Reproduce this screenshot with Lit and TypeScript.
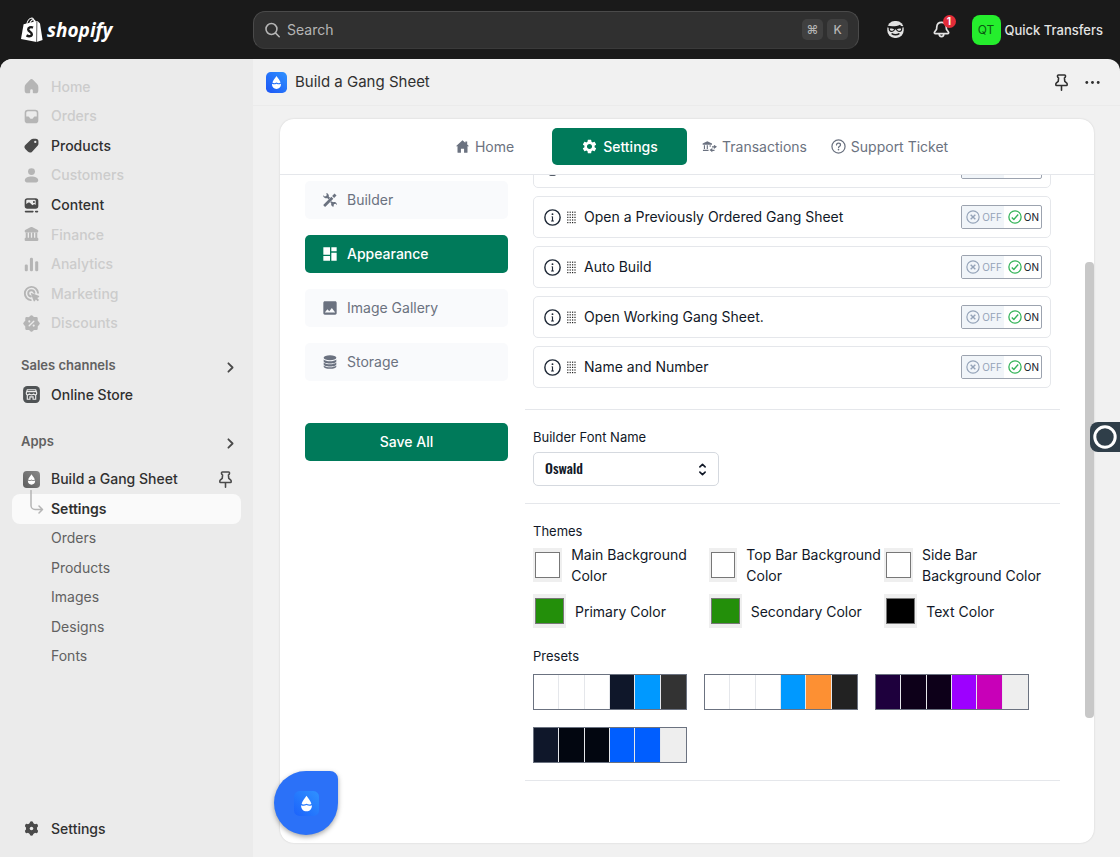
import { LitElement, html, svg, css, nothing, TemplateResult, SVGTemplateResult } from "lit";
import { customElement, property, state } from "lit/decorators.js";
import { classMap } from "lit/directives/class-map.js";

const GEAR = "M19.14 12.94c.04-.3.06-.61.06-.94 0-.32-.02-.64-.07-.94l2.03-1.58a.49.49 0 0 0 .12-.61l-1.92-3.32a.488.488 0 0 0-.59-.22l-2.39.96c-.5-.38-1.03-.7-1.62-.94l-.36-2.54a.484.484 0 0 0-.48-.41h-3.84c-.24 0-.43.17-.47.41l-.36 2.54c-.59.24-1.13.57-1.62.94l-2.39-.96c-.22-.08-.47 0-.59.22L2.74 8.87c-.12.21-.08.47.12.61l2.03 1.58c-.05.3-.09.63-.09.94s.02.64.07.94l-2.03 1.58a.49.49 0 0 0-.12.61l1.92 3.32c.12.22.37.29.59.22l2.39-.96c.5.38 1.03.7 1.62.94l.36 2.54c.05.24.24.41.48.41h3.84c.24 0 .44-.17.47-.41l.36-2.54c.59-.24 1.13-.56 1.62-.94l2.39.96c.22.08.47 0 .59-.22l1.92-3.32c.12-.22.07-.47-.12-.61l-2.01-1.58zM12 15.6c-1.98 0-3.6-1.62-3.6-3.6s1.62-3.6 3.6-3.6 3.6 1.62 3.6 3.6-1.62 3.6-3.6 3.6z";

/* Icons on a 20-unit grid are the admin's own; those on 24 belong to the embedded app. */
const ICONS: Record<string, [number, SVGTemplateResult]> = {
  home: [20, svg`<path fill="currentColor" d="M8.344 3.692a2.25 2.25 0 0 1 3.312 0l3.854 4.19a3.75 3.75 0 0 1 .99 2.538v3.33a2.75 2.75 0 0 1-2.75 2.75h-1.75a.75.75 0 0 1-.75-.75v-2a1.25 1.25 0 1 0-2.5 0v2a.75.75 0 0 1-.75.75h-1.75a2.75 2.75 0 0 1-2.75-2.75v-3.329c0-.94.353-1.847.99-2.539l3.854-4.19Z"/>`],
  orders: [20, svg`<path fill="currentColor" fill-rule="evenodd" d="M6.5 3.500h7a3 3 0 0 1 3 3v7a3 3 0 0 1-3 3h-7a3 3 0 0 1-3-3v-7a3 3 0 0 1 3-3Zm0 1.500A1.500 1.500 0 0 0 5 6.500V10h1.900c.5 0 .9.300 1.100.7l.3.7c.2.500.6.7 1.100.7h1.200c.5 0 .9-.2 1.100-.7l.3-.7c.2-.4.6-.7 1.100-.7H15V6.500A1.500 1.500 0 0 0 13.500 5h-7Z"/>`],
  products: [20, svg`<path fill="currentColor" fill-rule="evenodd" d="M9.600 4.300c.6-.5 1.200-.8 2-.8h2.400a2.600 2.600 0 0 1 2.600 2.600v2.200c0 .8-.3 1.500-.8 2l-5 5.300a3 3 0 0 1-4.300.1l-2.200-2.200a3 3 0 0 1 .1-4.300l5.200-4.900Zm4 3.400a1.100 1.100 0 1 0 0-2.200 1.100 1.100 0 0 0 0 2.200Z"/>`],
  customers: [20, svg`<g fill="currentColor"><circle cx="10" cy="6.300" r="3.300"/><path d="M3.600 14.600c0-2.300 3-3.600 6.400-3.600s6.400 1.300 6.400 3.600c0 1.200-.9 2-2 2H5.600c-1.100 0-2-.8-2-2Z"/></g>`],
  content: [20, svg`<path fill="currentColor" fill-rule="evenodd" d="M6 3h8a2.500 2.500 0 0 1 2.500 2.500v5A2.500 2.500 0 0 1 14 13H6a2.500 2.500 0 0 1-2.500-2.500v-5A2.500 2.500 0 0 1 6 3Zm0 1.500a1 1 0 0 0-1 1v3l1.700-1.200c.5-.4 1.200-.3 1.700.1l2.500 2.300 1-.7c.5-.3 1.100-.3 1.500.1l.6.500V5.500a1 1 0 0 0-1-1H6Z"/><circle cx="12.300" cy="6.700" r="1" fill="currentColor"/><path stroke="currentColor" stroke-width="1.500" stroke-linecap="round" d="M4.300 15.800h7M14 15.800h1.700"/>`],
  finance: [20, svg`<g fill="currentColor"><path d="M9 3.200c.6-.3 1.400-.3 2 0l4.600 2.200c.6.300.9.800.9 1.400 0 .7-.5 1.200-1.200 1.200H4.700c-.7 0-1.200-.5-1.200-1.200 0-.6.300-1.100.9-1.400L9 3.200Z"/><path d="M4.500 8h1.900v6H4.500zM7.600 8h1.800v6H7.600zM10.600 8h1.800v6h-1.800zM13.600 8h1.900v6h-1.900z"/><rect x="3.500" y="13" width="13" height="3.300" rx="1"/></g>`],
  analytics: [20, svg`<g fill="currentColor"><rect x="3.600" y="10" width="2.900" height="6.500" rx="1.200"/><rect x="8.500" y="3.500" width="2.900" height="13" rx="1.200"/><rect x="13.500" y="6.800" width="2.900" height="9.700" rx="1.200"/></g>`],
  marketing: [20, svg`<g fill="none" stroke="currentColor" stroke-width="1.800" stroke-linecap="round"><path d="M16.200 9.300A6.300 6.300 0 1 0 9.300 16.300"/><path d="M12.800 9.300A3 3 0 1 0 9.400 12.900"/></g><path fill="currentColor" d="m9.800 9.600 7 2.500c.7.200.7 1.100.1 1.400l-1.500.8 1.800 1.800-1.300 1.300-1.800-1.800-.8 1.500c-.3.600-1.200.6-1.400-.1l-2.500-7c-.1-.300.1-.500.4-.400Z"/>`],
  discounts: [20, svg`<path fill="currentColor" stroke="currentColor" stroke-width="2.400" stroke-linejoin="round" d="m10 3.300 2 1.800 2.700-.200.100 2.700L16.700 10l-1.900 2.300-.1 2.700-2.700-.2-2 1.900-2-1.900-2.700.2-.1-2.700L3.300 10l1.900-2.300.1-2.700 2.700.2Z"/><path stroke="#ebebeb" stroke-width="1.300" stroke-linecap="round" d="m7.800 12.200 4.400-4.400"/><g fill="#ebebeb"><circle cx="7.900" cy="8" r="1"/><circle cx="12.100" cy="12" r="1"/></g>`],
  store: [20, svg`<rect x="2" y="2" width="16" height="16" rx="4" fill="#4f5355"/><path d="M6 5.500h8l1 3.200c0 1-.7 1.600-1.500 1.600S12 9.700 12 9c0 .7-.8 1.300-2 1.300S8 9.700 8 9c0 .7-.7 1.300-1.500 1.300S5 9.700 5 8.700l1-3.200ZM6 10.500v4h2.500v-2.300h3v2.300H14v-4M5.700 7.300h8.600" fill="none" stroke="#ebebeb" stroke-width="1.100"/>`],
  cog: [20, svg`<g fill="currentColor" stroke="currentColor"><circle cx="10" cy="10" r="4.800"/><path stroke-width="3.600" stroke-linecap="round" d="M10 4.900v10.200M5.600 7.400l8.800 5.200M14.400 7.400l-8.800 5.200"/></g><circle cx="10" cy="10" r="1.700" fill="#ebebeb"/>`],
  gear: [24, svg`<path fill="currentColor" d=${GEAR}/>`],
  chevron: [20, svg`<path fill="none" stroke="currentColor" stroke-width="1.700" stroke-linecap="round" stroke-linejoin="round" d="m8 6 4 4-4 4"/>`],
  pin: [20, svg`<path fill="none" stroke="currentColor" stroke-width="1.500" stroke-linecap="round" stroke-linejoin="round" d="M7 2.800h6c.5 0 .8.300.8.800v.8c0 .6-.4 1-1 1.200l.3 3.400 1.700 1.400c.4.300.6.700.6 1.200v.500c0 .4-.3.700-.7.700H5.300c-.4 0-.7-.3-.7-.7v-.5c0-.5.2-.9.6-1.200l1.700-1.400.3-3.400c-.6-.2-1-.6-1-1.200v-.8c0-.5.3-.8.800-.8ZM10 13v4.300"/>`],
  dots: [20, svg`<g fill="currentColor"><circle cx="4" cy="10" r="1.500"/><circle cx="10" cy="10" r="1.500"/><circle cx="16" cy="10" r="1.500"/></g>`],
  search: [20, svg`<g fill="none" stroke="currentColor" stroke-width="1.500" stroke-linecap="round"><circle cx="9" cy="9.500" r="5.200"/><path d="m13 13.500 3.400 3.400"/></g>`],
  bell: [20, svg`<path fill="none" stroke="currentColor" stroke-width="1.600" stroke-linejoin="round" stroke-linecap="round" d="M10 3.200c-2.600 0-4.300 1.800-4.500 4.300l-.2 2.300-1.900 2.600c-.5.700-.1 1.600.8 1.600h11.600c.9 0 1.300-.9.800-1.600l-1.900-2.600-.2-2.300C14.300 5 12.600 3.200 10 3.200ZM7.800 14.300c0 1.500 1 2.500 2.200 2.500s2.200-1 2.200-2.500"/>`],
  sidekick: [20, svg`<rect x="2.200" y="2" width="15.600" height="16" rx="7" fill="#e3e3e3"/><path fill="#1a1a1a" d="M2 6.300c4 1.100 9 .9 12.300-.8l1 1.200c1 .2 1.900.1 2.700-.2v1.100c-.5.300-1 .5-1.500.5.200 2.900-.8 4.300-2.700 4.300-1.700 0-2.700-.8-3.200-2.100-.3-.3-.9-.3-1.200 0-.5 1.300-1.500 2.100-3.200 2.100-2.100 0-3-1.500-2.700-4L2 7.900V6.300Z"/><path fill="#e3e3e3" d="M4.600 9.200c1.300-.5 3-.3 4 .6-.6 1-1.300 1.400-2.200 1.400-1.100 0-1.700-.7-1.800-2ZM11.400 9.800c1-.9 2.700-1.100 4-.6-.1 1.300-.7 2-1.800 2-.9 0-1.600-.4-2.200-1.400Z"/><path d="M6.800 14.200c1.600 1.100 4.800 1.100 6.400 0" stroke="#1a1a1a" stroke-width="1.500" fill="none" stroke-linecap="round"/>`],
  appHome: [24, svg`<path fill="currentColor" d="M12 2 1.500 11.600H4V21c0 .5.400 1 1 1h4.500v-6.500h5V22H19c.6 0 1-.5 1-1v-9.400h2.500L19.500 8.900V4h-3v2.100L12 2Z"/>`],
  transactions: [24, svg`<g fill="currentColor"><path d="M8.500 3.500 1 7v2h15V7L8.500 3.500Z"/><path d="M3 10h1.800v6H3zM7.600 10h1.800v6H7.600zM12.200 10H14v2.500h-1.800zM1.500 17h9v2h-9z"/><path d="M19 9 24 12.500 19 16v-2.500h-3v-2h3zM16.500 14.500V17H20v2h-3.500v2L12 17.500z"/></g>`],
  help: [24, svg`<g fill="none" stroke="currentColor" stroke-width="2" stroke-linecap="round"><circle cx="12" cy="12" r="10.500"/><path d="M8.800 9.500c0-1.800 1.400-3 3.200-3s3.200 1.200 3.200 2.900c0 2-2.500 2.400-3.100 4.300"/></g><circle cx="12" cy="17" r="1.300" fill="currentColor"/>`],
  tools: [24, svg`<g fill="currentColor"><path d="m15.200 6 3.600-3.600 3 3L18.200 9zM2.200 19 14 7.200l3 3L5.200 22c-.8.800-3.800-2.200-3-3Z"/><path d="M6.500 1.500c1.900.3 3.300 1.500 3.700 3.300.2.700.1 1.400-.1 2l2 2-2.300 2.300-2-2c-2 .8-4.300.1-5.500-1.900-.5-.8-.7-1.700-.6-2.500l2.400 2L6.500 6 7 4.200ZM14.300 13.900l2.300 1.300c2-.7 4.200 0 5.300 1.900.5.800.6 1.600.6 2.400l-2.400-1.900-2.300.9-.5 3.700c-1.800-.3-3.100-1.500-3.500-3.200-.2-.8-.1-1.500.1-2.200l-1.500-1.100Z"/></g>`],
  dashboard: [24, svg`<path fill="currentColor" d="M2 2h10v11H2zM14 2h8v6h-8zM14 10h8v12h-8zM2 15h10v7H2z"/>`],
  image: [24, svg`<path fill="currentColor" d="M22 19.800V4.200C22 3 21 2 19.800 2H4.200C3 2 2 3 2 4.200v15.600C2 21 3 22 4.200 22h15.600c1.200 0 2.200-1 2.200-2.200ZM8.100 13.700l2.800 3.300 3.900-5 5 6.700H4.200l3.900-5Z"/>`],
  storage: [24, svg`<g fill="currentColor"><ellipse cx="12" cy="5.500" rx="9.500" ry="3.700"/><path d="M2.500 8.200c1.800 1.800 5.400 2.600 9.500 2.600s7.700-.8 9.500-2.600v2.600c0 2-4.300 3.400-9.500 3.400s-9.500-1.400-9.500-3.400zM2.500 12.900c1.800 1.800 5.400 2.600 9.500 2.600s7.700-.8 9.500-2.600v2.300c0 2-4.300 3.400-9.500 3.400s-9.500-1.400-9.500-3.400zM2.500 17.200c1.800 1.800 5.400 2.600 9.500 2.600s7.700-.8 9.500-2.600v1.500c0 2-4.300 3.600-9.500 3.600s-9.500-1.600-9.500-3.600z"/></g>`],
  info: [24, svg`<g fill="none" stroke="currentColor" stroke-width="2"><circle cx="12" cy="12" r="10.800"/><path d="M12 10.500v6.500M10.800 11h1.200M10 17h4" stroke-width="1.600"/></g><circle cx="12" cy="7.300" r="1.300" fill="currentColor"/>`],
  off: [24, svg`<g fill="none" stroke="currentColor" stroke-width="2"><circle cx="12" cy="12" r="10.500"/><path stroke-width="2.400" d="m8 8 8 8M16 8l-8 8"/></g>`],
  on: [24, svg`<g fill="none" stroke="currentColor" stroke-width="2.200" stroke-linejoin="round"><circle cx="12" cy="12" r="10.500"/><path stroke-width="2.400" d="m6.500 12.700 3.500 3.500 7.500-8.500"/></g>`],
  updown: [20, svg`<path fill="none" stroke="currentColor" stroke-width="2.200" stroke-linecap="round" stroke-linejoin="round" d="m6.500 6.500 3.500-3.300 3.500 3.300M6.500 13.500l3.500 3.300 3.500-3.300"/>`],
};

const icon = (name: string, size: number): TemplateResult => {
  const [grid, shape] = ICONS[name];
  return html`<svg width=${size} height=${size} viewBox="0 0 ${grid} ${grid}" aria-hidden="true" style="display:block;flex:none">${shape}</svg>`;
};

/* The drop logo of the app, on its rounded tile. */
const dropIcon = (id: string, size: number, top: string, bottom: string): TemplateResult => html`
  <svg width=${size} height=${size} viewBox="0 0 20 20" aria-hidden="true" style="display:block;flex:none">
    <defs><linearGradient id=${id} x1="1" y1="0" x2="0" y2="1">
      <stop offset="0" stop-color=${top}></stop><stop offset="1" stop-color=${bottom}></stop>
    </linearGradient></defs>
    <rect width="20" height="20" rx="4.500" fill="url(#${id})"></rect>
    <path fill="#fff" d="M10 3.800c1.500 2.200 3.300 4.200 3.900 6.300-1.300 1-2.500.8-3.900 0-1.400.8-2.600 1-3.900 0C6.700 8 8.500 6 10 3.800Z"></path>
    <path fill="#fff" d="M5.700 11.300c1.500.7 2.800.6 4.300-.1 1.500.7 2.800.8 4.300.1.200 2.900-1.800 4.900-4.300 4.900s-4.500-2-4.300-4.900Z"></path>
  </svg>`;

@customElement("option-row")
class OptionRow extends LitElement {
  @property() label = "";
  @state() private on = true;

  static styles = css`
    :host { display: flex; align-items: center; height: 42px; box-sizing: border-box; padding: 0 8px 0 10px; border: 1px solid #e5e7eb; border-radius: 5px; background: #fff; color: #111827; }
    .info { color: #1f2937; }
    .grip { flex: none; margin: 0 8px 0 6px; color: #222; }
    .label { flex: 1; min-width: 0; }
    .switch { display: flex; align-items: stretch; height: 24px; box-sizing: border-box; padding: 0; border: 1px solid #9ca3af; border-radius: 2px; background: #fff; font: inherit; font-size: 10px; cursor: pointer; overflow: hidden; }
    .side { display: flex; align-items: center; gap: 2px; padding: 0 2px 0 4px; color: #111827; }
    .idle { background: #f1f5f9; color: #94a3b8; }
    .yes { color: #34b459; }
  `;

  render() {
    return html`
      <span class="info">${icon("info", 17)}</span>
      <svg class="grip" width="9" height="13" viewBox="0 0 9 13" aria-hidden="true">
        ${[0, 1, 2, 3, 4].map((r) => [0, 1, 2, 3].map((c) => svg`<rect x=${c * 2.4 + 0.2} y=${r * 2.6 + 0.6} width="1.200" height="1.200" fill="currentColor"/>`))}
      </svg>
      <span class="label">${this.label}</span>
      <button class="switch" type="button" role="switch" aria-checked=${this.on} aria-label=${this.label || nothing} @click=${() => (this.on = !this.on)}>
        <span class=${classMap({ side: true, idle: this.on })}>${icon("off", 14)}OFF</span>
        <span class=${classMap({ side: true, idle: !this.on })}><span class=${classMap({ yes: this.on })}>${icon("on", 14)}</span>ON</span>
      </button>`;
  }
}

const NAV: [string, string, boolean][] = [
  ["home", "Home", false], ["orders", "Orders", false], ["products", "Products", true],
  ["customers", "Customers", false], ["content", "Content", true], ["finance", "Finance", false],
  ["analytics", "Analytics", false], ["marketing", "Marketing", false], ["discounts", "Discounts", false],
];
const TABS: [string, string][] = [["appHome", "Home"], ["gear", "Settings"], ["transactions", "Transactions"], ["help", "Support Ticket"]];
const SECTIONS: [string, string][] = [["tools", "Builder"], ["dashboard", "Appearance"], ["image", "Image Gallery"], ["storage", "Storage"]];
const OPTIONS = ["", "Open a Previously Ordered Gang Sheet", "Auto Build", "Open Working Gang Sheet.", "Name and Number"];
const COLORS: [string, string][] = [
  ["Main Background Color", "#ffffff"], ["Top Bar Background Color", "#ffffff"], ["Side Bar Background Color", "#ffffff"],
  ["Primary Color", "#238f0a"], ["Secondary Color", "#238f0a"], ["Text Color", "#000000"],
];
const PRESETS = [
  ["#ffffff", "#ffffff", "#ffffff", "#0f172a", "#0099ff", "#333333"],
  ["#ffffff", "#ffffff", "#ffffff", "#0099ff", "#fd9033", "#222222"],
  ["#1e003d", "#0d0019", "#0d0019", "#9d00ff", "#c800b8", "#eeeeee"],
  ["#0f172a", "#020610", "#020610", "#005eff", "#005eff", "#eeeeee"],
];

@customElement("app-root")
class AppRoot extends LitElement {
  static styles = css`
    :host { display: flex; flex-direction: column; height: 100vh; overflow: hidden; position: relative; background: #1a1a1a; font-family: Inter, "Liberation Sans", sans-serif; font-size: 14px; line-height: 20px; color: #303030; }
    * { box-sizing: border-box; }
    a { color: inherit; text-decoration: none; }
    button { font: inherit; cursor: pointer; }
    h1, h2, ul { margin: 0; padding: 0; font: inherit; list-style: none; }

    .top { display: grid; grid-template-columns: 253px minmax(0, 1fr) 261px; align-items: center; height: 59px; flex: none; color: #e3e3e3; }
    .brand { display: flex; align-items: center; gap: 4px; padding-left: 21px; color: #fff; font: italic 700 19px/26px "Open Sans", sans-serif; }
    .search { display: flex; align-items: center; gap: 4px; height: 38px; padding: 0 10px 0 8px; border: 1px solid #4a4a4a; border-bottom-color: #3a3a3a; border-radius: 12px; background: #303030; color: #b5b5b5; }
    .search input { flex: 1; min-width: 0; padding: 0; border: 0; outline: 0; background: none; font: inherit; color: inherit; }
    .search input::placeholder { color: #b5b5b5; opacity: 1; }
    .key { display: grid; place-items: center; width: 21px; height: 21px; border-radius: 5px; background: #404040; font: 500 12px/16px Inter, "DejaVu Sans", sans-serif; }
    .tools { display: flex; align-items: center; justify-content: flex-end; padding-right: 17px; }
    .plain { display: block; padding: 0; border: 0; background: none; color: inherit; }
    .alert { position: relative; margin: 0 20px 0 25px; }
    .badge { position: absolute; left: 12px; top: -4px; width: 13px; height: 13px; border-radius: 7px; background: #e22c38; color: #fff; font: 700 10px/13px Inter, sans-serif; text-align: center; }
    .account { display: flex; align-items: center; gap: 4px; padding: 0; border: 0; background: none; color: #e3e3e3; font-weight: 500; font-size: 13px; }
    .avatar { display: grid; place-items: center; width: 29px; height: 30px; border-radius: 8px; background: #25ee2d; color: #0a5a12; font-size: 12px; font-weight: 400; }

    .shell { flex: 1; min-height: 0; display: grid; grid-template-columns: 253px minmax(0, 1fr); border-radius: 12px 12px 0 0; overflow: hidden; background: #f1f1f1; }
    .side { display: flex; flex-direction: column; padding: 13px 12px 14px; background: #ebebeb; font-weight: 500; }
    .nav { display: flex; flex-direction: column; height: 266px; }
    .item { flex: 1; display: flex; align-items: center; gap: 9px; padding-left: 9px; color: #303030; }
    .item svg { color: #4a4a4a; }
    .muted { color: #cccccc; }
    .muted svg { color: #b5b5b5; }
    .group { display: flex; align-items: center; justify-content: space-between; height: 30px; padding: 0 0 0 9px; border: 0; background: none; color: #616161; font-size: 13px; font-weight: 600; }
    .group svg { position: relative; top: 2px; color: #4a4a4a; }
    .channels { margin-top: 12px; }
    .store { flex: none; height: 29px; }
    .apps { margin-top: 17px; }
    .app { flex: none; height: 30px; margin-top: 8px; padding-right: 5px; }
    .tile { padding: 0 2px; }
    .grow { flex: 1; }
    .sub { display: flex; flex-direction: column; height: 177px; font-weight: 400; color: #616161; }
    .sub a { flex: 1; display: flex; align-items: center; padding-left: 39px; border-radius: 8px; position: relative; }
    .sub .here { background: #fafafa; color: #303030; font-weight: 600; }
    .tree { position: absolute; left: 18px; top: -4px; }
    .bottom { flex: none; height: 29px; margin-top: auto; }

    .main { display: flex; flex-direction: column; min-width: 0; }
    .title { display: flex; align-items: center; gap: 8px; height: 47px; flex: none; padding: 0 18px 0 13px; border-bottom: 1px solid #ebebeb; font-size: 15px; }
    .title h1 { flex: 1; }
    .more { margin-left: 3px; }
    .card { flex: 1; min-height: 0; display: flex; flex-direction: column; margin: 13px 26px 14px 27px; border-radius: 14px; background: #fff; box-shadow: 0 0 2px rgba(0, 0, 0, 0.15); overflow: hidden; position: relative; }
    .tabs { display: flex; justify-content: center; height: 56px; flex: none; padding: 9px 0 9px; border-bottom: 1px solid #e5e7eb; color: #6b7280; }
    .tab { display: flex; align-items: center; justify-content: center; gap: 5px; width: 135px; border-radius: 5px; white-space: nowrap; }
    .picked { background: #007a5a; color: #fff; font-weight: 500; }
    .work { flex: 1; min-height: 0; display: grid; grid-template-columns: 203px minmax(0, 1fr); gap: 17px; padding: 0 34px 0 25px; overflow: hidden; }
    .menu { display: flex; flex-direction: column; gap: 16px; padding-top: 6px; color: #6b7280; }
    .entry { display: flex; align-items: center; gap: 9px; height: 38px; padding-left: 17px; border-radius: 5px; background: #f9fafc; }
    .menu .picked { background: #007a5a; }
    .save { height: 38px; margin-top: 26px; padding: 0; border: 0; border-radius: 5px; background: #007a5a; color: #fff; font-weight: 500; }
    .panel { color: #111827; }
    .list { display: flex; flex-direction: column; gap: 8px; margin: -29px 9px 0 8px; padding-bottom: 21px; }
    .block { padding: 17px 0 17px 8px; border-top: 1px solid #e5e7eb; }
    .small { display: block; font-size: 13px; line-height: 20px; }
    .select { display: grid; align-items: center; width: 186px; margin-top: 5px; }
    .select > * { grid-area: 1 / 1; }
    .select svg { justify-self: end; margin-right: 9px; pointer-events: none; }
    select { appearance: none; width: 100%; height: 34px; padding: 0 30px 2px 11px; border: 1px solid #d5d9df; border-radius: 5px; background: #fff; color: #111827; font: 500 14px/20px Oswald, "Liberation Sans Narrow", "DejaVu Sans Condensed", sans-serif; }
    .colors { display: grid; grid-template-columns: repeat(3, minmax(0, 1fr)); align-items: center; row-gap: 8px; margin: 3px 0 18px; }
    .color { display: flex; align-items: center; gap: 9px; line-height: 21px; }
    .color span { max-width: 138px; }
    .color input { width: 33px; height: 34px; min-width: 0; padding: 0; border: 0; background: #efefef; }
    .presets { display: flex; flex-wrap: wrap; gap: 17px; margin-top: 8px; }
    .preset { display: grid; grid-template-columns: repeat(6, 1fr); width: 154px; height: 36px; padding: 0; border: 1px solid #6b7280; background: #fff; }
    .cell { border-right: 1px solid #e5e7eb; }
    .cell:last-child { border: 0; }
    .end { border-top: 1px solid #e5e7eb; }
    .bar { position: absolute; right: 0; top: 143px; bottom: 125px; width: 9px; border-radius: 4px; background: #c8c8c8; }

    .chat { position: absolute; left: 274px; bottom: 22px; display: grid; place-items: center; width: 64px; height: 64px; padding: 0; border: 0; border-radius: 32px 8px 32px 32px; background: #2b71f8; box-shadow: 0 2px 5px rgba(0, 0, 0, 0.35); }
    .rec { position: absolute; right: 0; top: 422px; width: 30px; height: 30px; padding: 0 0 0 3px; border: 0; border-radius: 8px 0 0 8px; background: #2f3e49; }
  `;

  @state() private section = "Appearance";

  render() {
    return html`
      <header class="top">
        <a class="brand" href="#">
          <svg width="22" height="26" viewBox="0 0 22 26" aria-hidden="true">
            <path fill="#fff" d="M2.600 7.300 15.800 4l1 .3 2.200 2.200L21.600 23l-6 1.900L0 22Z"></path>
            <path fill="none" stroke="#fff" stroke-width="1.100" d="M5.500 8.500C6 4.500 8.200 1.200 10.700 1c1.700 0 2.500 2 2.600 5M8.700 7c.6-2.800 2.500-4.700 4-4.300 1 .3 1.500 1.300 1.700 2.800"></path>
            <path stroke="#1a1a1a" stroke-width=".7" d="M15.900 4.300 15.600 25"></path>
            <path fill="none" stroke="#1a1a1a" stroke-width="2.400" d="M12 10.600c-2.200-1-4.800-.2-4.800 1.900 0 2.300 3.600 2.300 3.600 4.700 0 2.200-2.900 2.600-5.300 1.200"></path>
          </svg>
          <span>shopify</span>
        </a>
        <label class="search">${icon("search", 21)}
          <input type="text" placeholder="Search" aria-label="Search">
          <span class="key">⌘</span><span class="key">K</span>
        </label>
        <div class="tools">
          <button class="plain" type="button" aria-label="Sidekick">${icon("sidekick", 21)}</button>
          <button class="plain alert" type="button" aria-label="Notifications">${icon("bell", 21)}<span class="badge">1</span></button>
          <button class="account" type="button"><span class="avatar">QT</span>Quick Transfers</button>
        </div>
      </header>
      <div class="shell">
        <aside class="side">
          <nav class="nav">
            ${NAV.map(([i, name, active]) => html`<a href="#" class=${classMap({ item: true, muted: !active })}>${icon(i, 21)}${name}</a>`)}
          </nav>
          <button class="group channels" type="button">Sales channels${icon("chevron", 21)}</button>
          <a class="item store" href="#">${icon("store", 21)}Online Store</a>
          <button class="group apps" type="button">Apps${icon("chevron", 21)}</button>
          <a class="item app" href="#"><span class="tile">${dropIcon("tile-side", 17, "#8a8a8a", "#5c5c5c")}</span><span class="grow">Build a Gang Sheet</span>${icon("pin", 21)}</a>
          <nav class="sub">
            ${["Settings", "Orders", "Products", "Images", "Designs", "Fonts"].map((name, n) => html`
              <a href="#" class=${classMap({ here: n === 0 })}>${n === 0 ? html`
                <svg class="tree" width="14" height="26" viewBox="0 0 14 26" aria-hidden="true"><path fill="none" stroke="#b5b5b5" stroke-width="1.500" stroke-linecap="round" stroke-linejoin="round" d="M1 .5v15a4 4 0 0 0 4 4h7M9 16l3.500 3.500L9 23"></path></svg>` : nothing}${name}</a>`)}
          </nav>
          <a class="item bottom" href="#">${icon("cog", 21)}Settings</a>
        </aside>
        <main class="main">
          <div class="title">
            ${dropIcon("tile-title", 21, "#2f92ff", "#1c55f5")}
            <h1>Build a Gang Sheet</h1>
            <button class="plain" type="button" aria-label="Pin">${icon("pin", 21)}</button>
            <button class="plain more" type="button" aria-label="More">${icon("dots", 19)}</button>
          </div>
          <section class="card">
            <nav class="tabs">
              ${TABS.map(([i, name]) => html`<a href="#" class=${classMap({ tab: true, picked: name === "Settings" })}>${icon(i, i === "gear" ? 17 : 15)}${name}</a>`)}
            </nav>
            <div class="work">
              <div class="menu">
                ${SECTIONS.map(([i, name]) => html`<a href="#" class=${classMap({ entry: true, picked: name === this.section })} @click=${() => (this.section = name)}>${icon(i, 16)}${name}</a>`)}
                <button class="save" type="button">Save All</button>
              </div>
              <div class="panel">
                <div class="list">${OPTIONS.map((label) => html`<option-row .label=${label}></option-row>`)}</div>
                <div class="block">
                  <label class="small" for="font">Builder Font Name</label>
                  <div class="select">
                    <select id="font"><option>Oswald</option></select>
                    ${icon("updown", 15)}
                  </div>
                </div>
                <div class="block">
                  <h2 class="small">Themes</h2>
                  <div class="colors">
                    ${COLORS.map(([name, value]) => html`<label class="color"><input type="color" .value=${value}><span>${name}</span></label>`)}
                  </div>
                  <h2 class="small">Presets</h2>
                  <div class="presets">
                    ${PRESETS.map((set, n) => html`<button class="preset" type="button" aria-label="Preset ${n + 1}">${set.map((c) => html`<span class="cell" style="background:${c}"></span>`)}</button>`)}
                  </div>
                </div>
                <div class="end"></div>
              </div>
            </div>
            <div class="bar"></div>
          </section>
        </main>
      </div>
      <button class="chat" type="button" aria-label="Help">${dropIcon("tile-chat", 25, "#2f92ff", "#1c62fb")}</button>
      <button class="rec" type="button" aria-label="Record">
        <svg width="24" height="24" viewBox="0 0 24 24" aria-hidden="true" style="display:block"><circle cx="12" cy="12" r="10.200" fill="none" stroke="#fff" stroke-width="3"></circle></svg>
      </button>`;
  }
}
